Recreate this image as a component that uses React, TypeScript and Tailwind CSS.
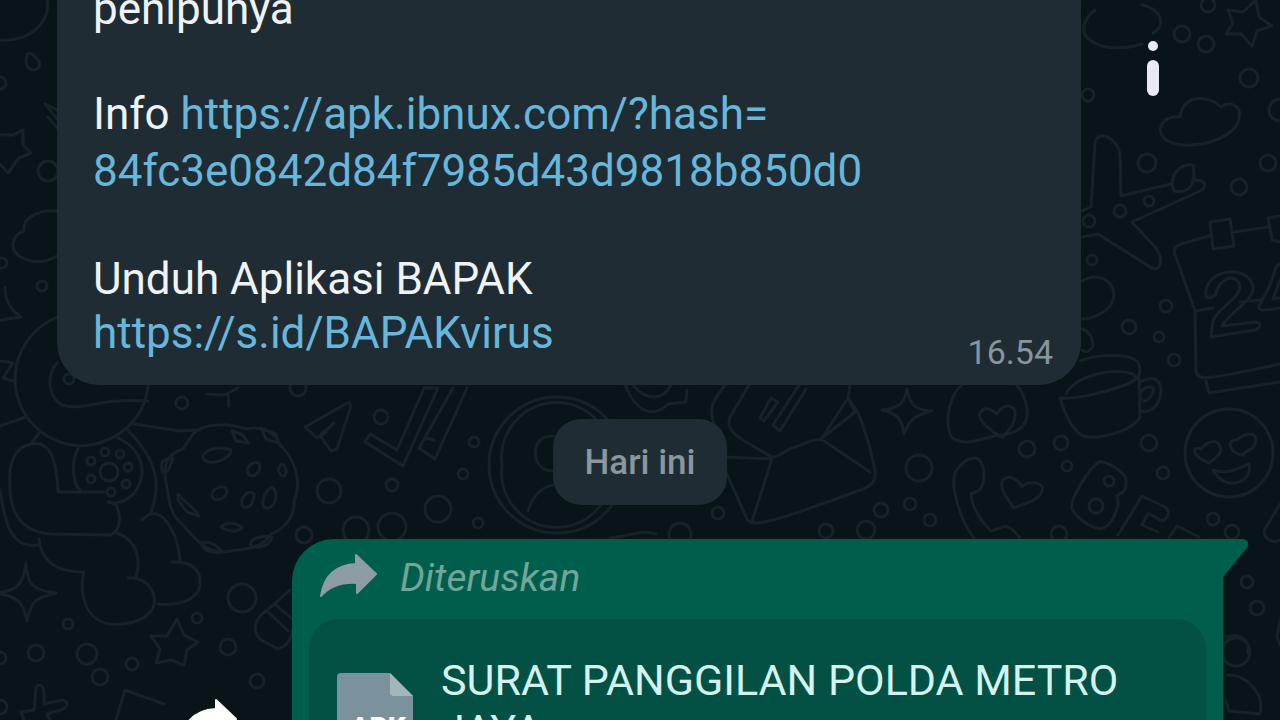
import React from 'react';

const dots: [number, number, number][] = [
  [1208, 5, 7], [1182, 34, 8], [1206, 44, 8], [1249, 78, 9], [1280, 110, 11], [1088, 95, 6],
  [1147, 163, 9], [1268, 163, 8], [1239, 187, 8], [1149, 201, 5], [1120, 211, 6], [1089, 221, 6],
  [1092, 260, 5], [1166, 306, 6], [1129, 327, 7], [1159, 337, 5], [1174, 360, 6], [1149, 443, 8],
  [1163, 473, 6], [1213, 519, 6], [1232, 532, 7], [1061, 443, 7], [1067, 466, 5], [1027, 449, 8],
  [1059, 534, 8], [919, 468, 13], [910, 504, 6], [881, 510, 7], [930, 520, 6], [826, 531, 7],
  [866, 530, 9], [718, 513, 6], [680, 534, 11], [48, 171, 10], [0, 83, 6], [42, 286, 5],
  [2, 263, 5], [69, 379, 5], [182, 403, 6], [298, 388, 8], [304, 535, 8], [68, 624, 5],
  [36, 653, 8], [0, 658, 6], [87, 654, 10], [132, 664, 6], [100, 677, 8], [197, 618, 5],
  [242, 598, 14], [228, 647, 8], [257, 681, 7], [0, 707, 7], [381, 417, 7], [329, 491, 12],
  [392, 485, 6], [474, 442, 5], [463, 474, 5], [438, 509, 13], [478, 523, 5], [356, 530, 13],
  [392, 527, 14], [1247, 582, 6], [1257, 608, 7], [1236, 652, 14], [1096, 506, 7],
  [1109, 481, 5], [109, 472, 9], [105, 452, 4], [120, 454, 4], [91, 461, 4], [128, 467, 4],
  [91, 479, 4], [126, 484, 4], [111, 492, 4],
];

const doodles = [
  // clouds
  'M1095 10C1082 20 1080 34 1091 41C1104 50 1125 49 1142 44M1142 5C1164 10 1165 27 1153 33',
  'M1180 117C1160 115 1154 134 1168 141C1190 153 1238 138 1239 118C1242 105 1229 101 1221 107C1211 96 1184 92 1180 117Z',
  'M57 211C36 209 22 220 24 231C10 236 9 252 23 258C34 264 46 262 57 256',
  'M47 0C51 20 32 42 0 40',
  // drops and stars on the left edge
  'M27 55C29 51 34 55 38 60C44 67 33 74 28 67C25 62 26 60 27 55Z',
  'M0 135L13 135L23 130L23 145L31 153L19 158L8 173L0 164',
  'M45 104L57 110M48 117L57 128M45 104L57 119',
  'M5 287C5 300 9 308 21 317C12 318 4 319 0 321',
  // star on the right
  'M1228 10L1243 12L1256 0L1259 17L1272 26L1257 31L1252 46L1241 34L1226 34L1233 23Z',
  // plane
  'M1082 211L1091 207L1095 143C1098 128 1119 139 1120 155L1121 196L1171 184M1193 180C1207 179 1207 188 1200 191L1132 222L1155 247C1165 260 1160 274 1150 267L1098 234L1082 237',
  'M1174 191C1168 177 1179 163 1193 165C1196 180 1192 195 1174 191Z',
  // calendar
  'M1209 236L1181 244C1173 247 1173 251 1176 257L1195 311L1196 371C1197 381 1206 380 1280 364M1195 311L1213 308M1240 302L1262 300M1206 381L1209 393L1280 382M1210 222L1230 219L1234 246L1213 249ZM1234 232L1268 227M1268 218L1280 216M1268 218L1272 240L1280 242',
  'M1206 297C1202 270 1246 262 1253 286C1255 301 1232 309 1222 326L1255 322C1262 322 1261 328 1255 330L1211 337L1213 321C1217 308 1240 299 1240 286C1236 271 1217 280 1216 294C1212 299 1208 298 1206 297Z',
  'M1280 264C1274 265 1275 275 1268 289L1259 306C1258 312 1266 310 1280 308M1280 280L1273 299L1280 298',
  // half heart and bulbs
  'M1082 281C1099 270 1118 283 1113 300C1111 311 1092 319 1082 319',
  'M1082 329C1092 332 1096 347 1090 350C1086 354 1082 350 1082 350',
  // cup
  'M1080 361C1096 354 1136 352 1139 365C1142 374 1138 381 1122 386C1100 394 1075 399 1060 398C1064 411 1072 430 1083 436C1097 440 1132 432 1140 417L1139 377M1066 394C1077 371 1128 367 1135 376M1139 383C1156 372 1165 383 1159 400C1155 412 1145 412 1140 411M1143 401C1136 396 1143 386 1151 387C1158 389 1148 402 1143 401Z',
  // heart-eyed face
  'M1273 453A44 44 0 1 1 1185 453A44 44 0 1 1 1273 453M1209 463C1191 456 1192 445 1201 449C1207 441 1218 438 1220 447C1223 455 1214 458 1209 463ZM1243 455C1226 452 1228 438 1237 440C1247 431 1260 433 1255 443C1254 451 1246 449 1243 455ZM1213 470C1228 475 1239 468 1249 464C1254 481 1226 494 1213 470Z',
  // block letters
  'M1099 462C1104 460 1128 472 1126 482C1127 492 1120 493 1117 496C1121 507 1112 527 1100 529C1089 527 1074 516 1072 508C1070 499 1088 469 1099 462Z',
  'M1118 535L1142 496L1165 507C1173 512 1165 523 1160 520L1148 513L1142 525L1158 532M1169 538L1177 526L1199 537',
  'M1280 504L1265 529C1262 538 1272 544 1280 540',
  // sparkles
  'M907 389C910 405 915 410 932 411C916 415 910 418 904 434C902 419 897 413 882 410C899 408 904 404 907 389Z',
  'M26 563C27 584 32 590 56 593C34 598 31 602 27 621C23 602 18 597 -3 593C18 590 23 585 26 563Z',
  // bread with heart
  'M962 385C945 398 944 438 956 440C971 446 988 436 1000 435C1018 434 1029 425 1027 409C1025 397 1021 390 1017 385M1003 438C988 430 977 418 980 413C985 404 995 412 997 414C1004 401 1017 406 1015 415C1014 428 1007 430 1003 438Z',
  // phone and heart
  'M974 538C960 520 949 484 956 471C963 461 971 456 979 459C988 472 983 489 978 491L971 494C972 507 980 520 991 531L1000 528C1007 524 1012 528 1020 538',
  'M1014 508C1007 499 998 486 1003 480C1010 473 1020 482 1022 487C1028 480 1045 482 1042 491C1039 501 1022 504 1014 508Z',
  // envelope
  'M725 385C712 402 709 407 714 425M749 385L730 417C725 431 735 436 772 457C779 458 784 450 795 447C810 442 817 437 824 441L870 472M726 457L772 459L752 521M726 472L747 519C752 528 772 523 863 489C873 485 876 480 875 470C869 442 861 417 855 408L848 398L850 385M848 398L822 438L855 412L848 398M760 418L771 398L778 402L764 421ZM799 385L773 425L780 431L806 389',
  // avatar ring
  'M625 465A68 68 0 1 1 489 465A68 68 0 1 1 625 465M611 465A55 55 0 1 1 502 465A55 55 0 1 1 611 465M553 436C530 434 529 470 552 471M553 485C539 488 532 498 528 511M625 385C637 414 654 418 668 404L686 402L687 390M633 385C645 400 662 402 671 385M610 538C630 536 644 529 656 534',
  // double tick
  'M424 388L438 388L403 466L365 442L370 434L397 450L424 388M453 388L419 448L435 459L467 388M419 448L425 438L434 440',
  'M305 427L349 402L351 406L337 449L331 451L321 437L334 423L317 438Z',
  // helmet and astronaut
  'M57 317C26 331 11 361 16 391C23 425 51 445 82 446C117 443 144 421 148 386M57 363C45 377 49 402 66 406C86 410 98 398 148 401M0 361L13 363L3 378L13 381M0 426L26 417M0 490C5 525 12 549 38 545M40 432L31 444C15 448 8 461 10 488C11 520 27 532 50 534L110 535C125 529 118 509 116 504L109 502M31 444C51 440 57 462 58 492L104 492',
  'M78 448C70 466 74 484 80 490M118 438C143 450 148 473 135 492C127 502 113 505 108 502M127 429C145 448 167 474 150 514',
  'M39 539C41 558 52 572 84 572C78 595 87 621 110 624C138 626 157 614 154 597C152 584 140 577 128 578M117 533C138 541 141 560 136 577M142 520C152 509 164 513 171 529C176 537 179 547 180 560M172 562C191 561 202 570 200 585C197 602 175 606 158 604',
  'M134 424L180 431L200 430',
  // cookie
  'M193 434C203 424 225 422 246 429C261 425 277 433 280 445C296 460 302 483 294 501C295 516 285 529 271 534C263 549 241 550 222 552C203 551 194 537 183 525C168 513 169 495 166 482C162 461 170 453 183 449Z',
  'M204 460C199 451 216 445 231 450C230 459 212 466 204 460ZM232 431L243 435L248 443L236 441ZM261 428L276 434L278 443L266 439ZM249 475C243 469 253 460 259 463C262 471 255 478 249 475ZM280 474C275 467 284 461 285 467C288 474 284 479 280 474ZM213 498C209 491 219 484 226 488C230 496 218 503 213 498ZM243 507C238 500 248 488 254 494C253 503 251 509 243 507ZM268 508C258 510 264 489 272 487C279 493 276 506 268 508ZM178 494C184 502 195 508 199 516L187 512L178 500ZM221 527C228 521 238 523 242 528C234 534 227 531 221 527ZM201 543C209 540 219 546 221 552C211 554 203 550 201 543ZM251 546C248 538 264 535 272 537C270 546 259 549 251 546ZM163 472C159 462 163 459 173 458C169 469 169 472 163 472Z',
  'M207 394L224 395L238 388M228 395L229 406',
  // pencil end, star, plus
  'M290 590L272 606L261 615C251 626 256 637 263 641L278 649C286 647 292 640 292 630M267 611L288 631M275 604L292 619',
  'M177 619L184 635L198 642L187 650L184 665L171 660L156 663L160 649L151 636L167 636Z',
  'M116 720L125 690L164 704',
  'M37 686C42 683 45 688 44 704L62 700C69 701 68 708 61 710L47 714L50 720M36 688L34 710L21 712L24 720',
  'M1226 637C1240 632 1250 640 1248 653M1227 675C1246 674 1265 693 1260 714L1229 711L1226 700',
  'M1280 620L1277 637L1280 645',
];

const Wallpaper = () => (
  <svg
    className="absolute inset-0 w-full h-full"
    viewBox="0 0 1280 720"
    preserveAspectRatio="xMinYMin slice"
    fill="none"
    stroke="#162228"
    strokeWidth="3"
    strokeLinecap="round"
    strokeLinejoin="round"
    aria-hidden="true"
  >
    {dots.map(([cx, cy, r], i) => (
      <circle key={i} cx={cx} cy={cy} r={r} />
    ))}
    {doodles.map((d, i) => (
      <path key={i} d={d} />
    ))}
  </svg>
);

const ForwardArrow = ({ className }: { className: string }) => (
  <svg className={className} viewBox="0 0 57 44" fill="currentColor" stroke="currentColor" strokeWidth="2" strokeLinejoin="round" aria-hidden="true">
    <path d="M36 1L56 20L37 39V29C21 28 10 32 1 42C4 22 16 11 36 10Z" />
  </svg>
);

const FileIcon = () => (
  <svg className="w-[76px] h-[98px] mt-[18px] shrink-0" viewBox="0 0 76 98" aria-hidden="true">
    <path d="M4 0H53L76 23V94Q76 98 72 98H4Q0 98 0 94V4Q0 0 4 0Z" fill="#7b919b" />
    <path d="M53 0L76 23H57Q53 23 53 19Z" fill="#a3b6bb" />
    <text x="41" y="64" textAnchor="middle" fill="#ffffff" fontFamily="Roboto, sans-serif" fontWeight="900" fontSize="28">
      APK
    </text>
  </svg>
);

const InfoMessage = () => (
  <div className="flex items-start -mt-[18px]">
    <div className="w-4/5 ml-[57px] bg-[#202c33] rounded-b-[42px] pl-9 pr-7 pb-[13px] text-[44px] text-[#eff3f5]">
      <p className="leading-[54px] mb-[50px]">penipunya</p>
      <p className="leading-[57px] mb-[52px]">
        Info{' '}
        <a className="text-[#67b7dc]" href="https://apk.ibnux.com/?hash=84fc3e0842d84f7985d43d9818b850d0">
          https://apk.ibnux.com/?hash=
          <br />
          84fc3e0842d84f7985d43d9818b850d0
        </a>
      </p>
      <div className="flex items-end justify-between">
        <p className="leading-[54px] pb-3">
          Unduh Aplikasi BAPAK
          <br />
          <a className="text-[#67b7dc]" href="https://s.id/BAPAKvirus">
            https://s.id/BAPAKvirus
          </a>
        </p>
        <time className="text-[34px] leading-10 text-[#87959d]">16.54</time>
      </div>
    </div>
    <button type="button" aria-label="Info" className="mt-[46px] ml-12 w-12 h-20 flex justify-center items-center">
      <svg className="w-3 h-14" viewBox="0 0 12 56" fill="#e7ebf1" aria-hidden="true">
        <circle cx="6" cy="6" r="5" />
        <rect x="0" y="20" width="12" height="36" rx="6" />
      </svg>
    </button>
  </div>
);

const ForwardedMessage = () => (
  <div className="flex items-start px-[57px]">
    <button type="button" aria-label="Teruskan" className="w-[235px] shrink-0 pt-40 flex justify-end text-white">
      <ForwardArrow className="w-[57px] h-11 mr-[55px]" />
    </button>
    <div className="relative flex-1 h-72 bg-[#005f4c] rounded-tl-[42px] px-[17px]">
      <svg className="absolute top-0 left-full w-[26px] h-[38px]" viewBox="0 0 26 38" fill="#005f4c" aria-hidden="true">
        <path d="M-1 0H20Q28 2 24 9L0 38H-1Z" />
      </svg>
      <div className="h-20 pl-[11px] flex items-center gap-[23px] pb-1.5">
        <ForwardArrow className="w-[57px] h-11 text-[#8e9ca5]" />
        <span className="text-[39px] leading-[44px] pt-1 italic text-[#72a698]">Diteruskan</span>
      </div>
      <div className="bg-[#025144] rounded-[30px] h-48 pt-9 px-7 flex items-start gap-7">
        <FileIcon />
        <p className="text-[43px] leading-[50px] text-[#d5f3ee]">SURAT PANGGILAN POLDA METRO JAYA</p>
      </div>
    </div>
  </div>
);

const App = () => {
  return (
    <main className="relative h-screen overflow-hidden bg-[#091419] font-['Roboto',sans-serif]">
      <Wallpaper />
      <div className="relative flex flex-col gap-[34px]">
        <InfoMessage />
        <div className="self-center bg-[#202c33] rounded-[28px] px-[31px] pt-5 pb-[18px] text-[35px] leading-[48px] font-medium text-[#8a979e]">
          Hari ini
        </div>
        <ForwardedMessage />
      </div>
    </main>
  );
};

export default App;
